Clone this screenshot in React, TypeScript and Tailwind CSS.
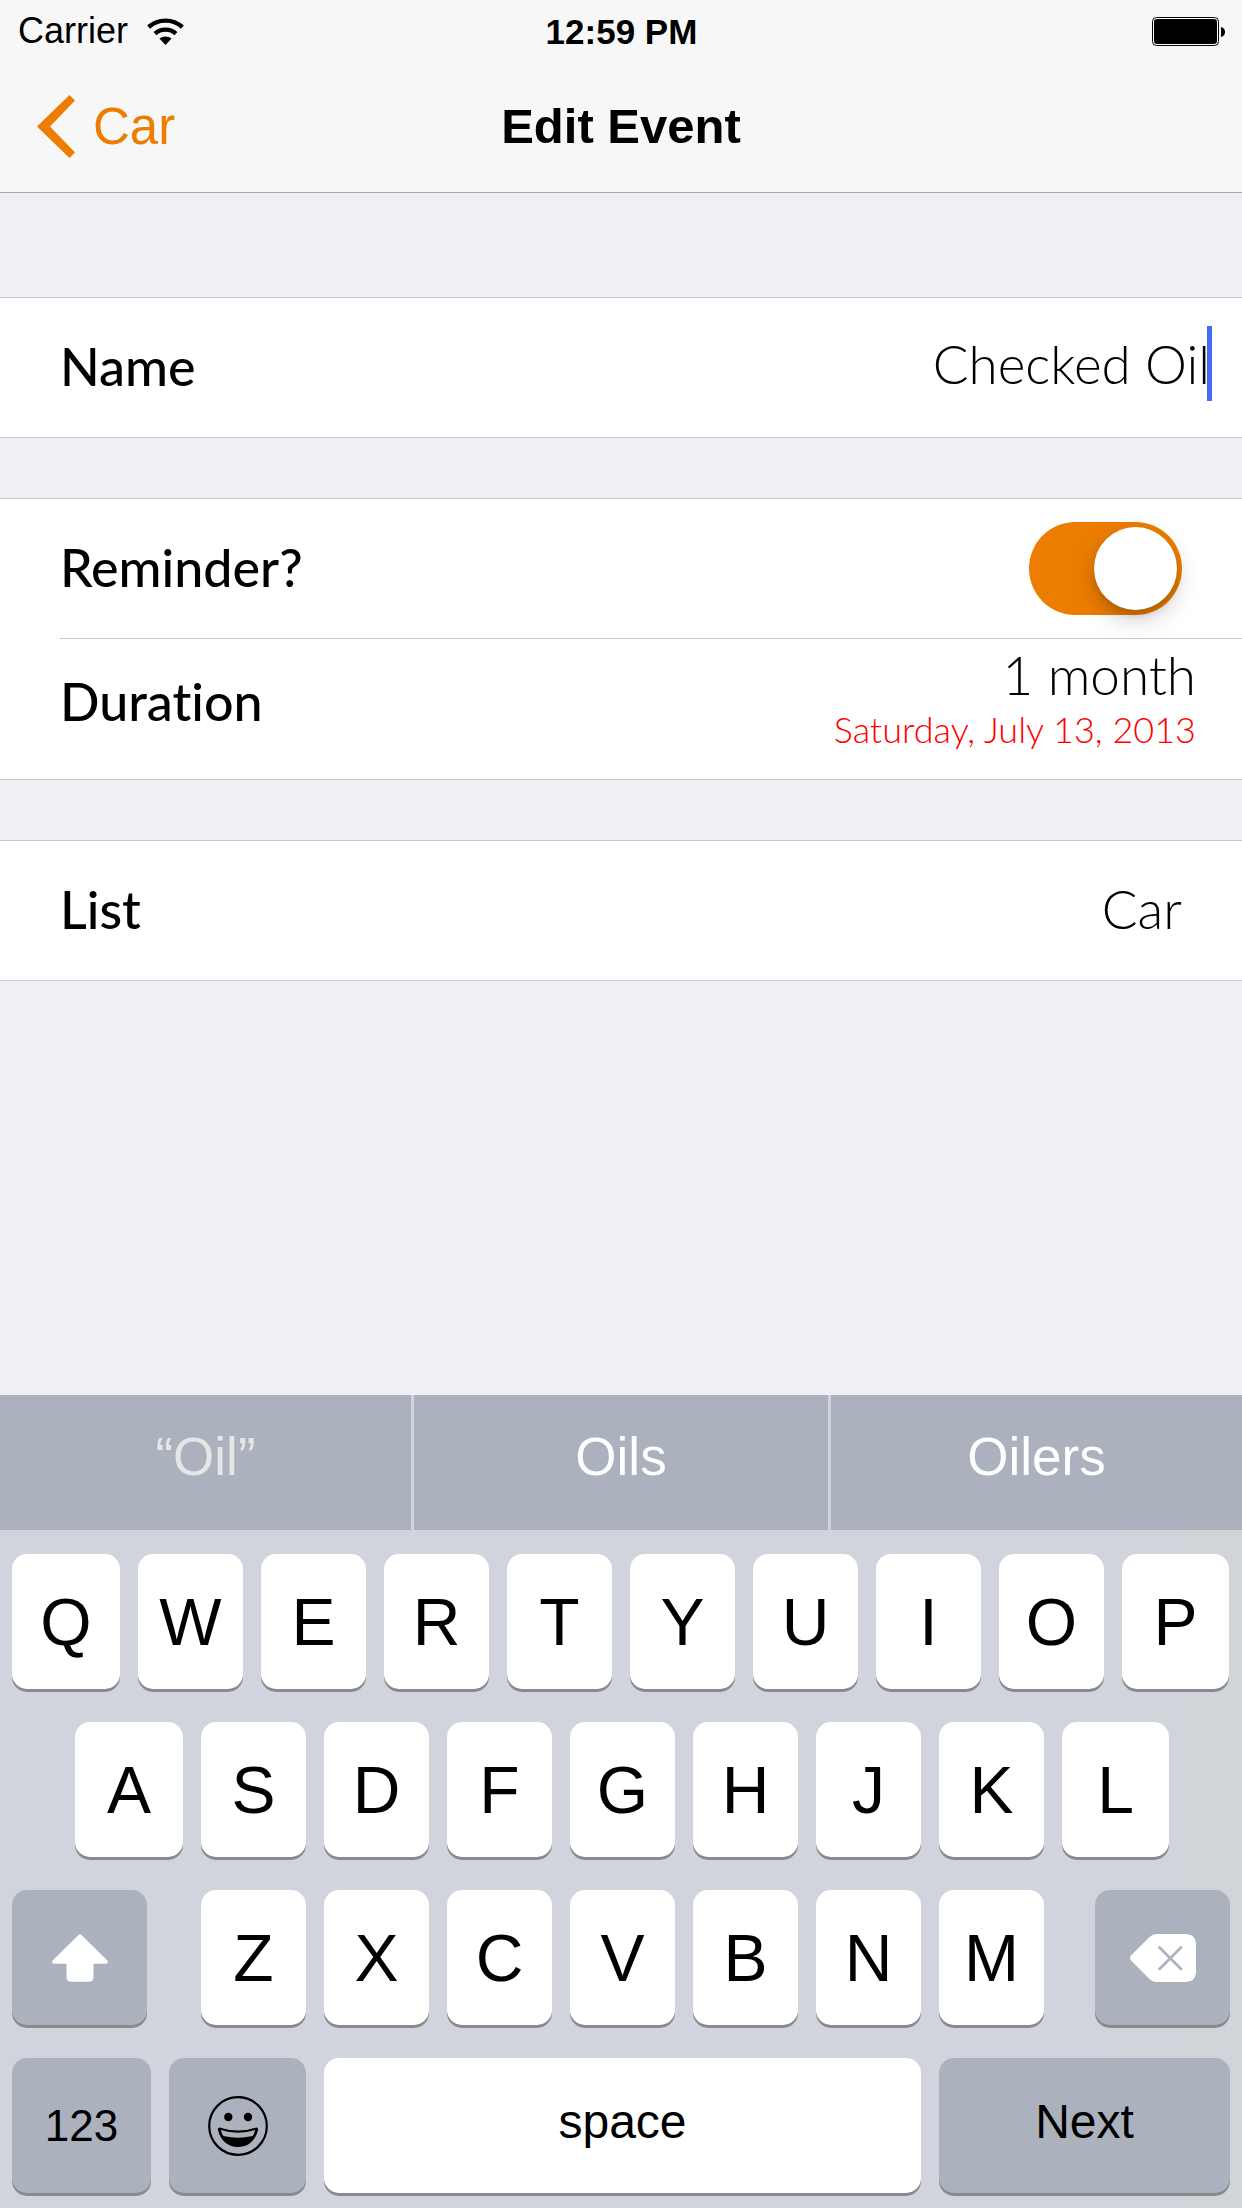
import React, { useState } from "react";

const SANS = "font-['Liberation_Sans',Arial,sans-serif]";

function WifiIcon() {
  return (
    <svg width="37" height="27" viewBox="0 0 37 27" aria-hidden="true">
      <g fill="none" stroke="#000" strokeWidth="4.4">
        <path d="M1.6 9 A25.5 25.5 0 0 1 35.4 9" />
        <path d="M8 15.6 A16 16 0 0 1 29 15.6" />
      </g>
      <path d="M12.4 20.6 A9.5 9.5 0 0 1 24.6 20.6 L18.5 27 Z" />
    </svg>
  );
}

function BatteryIcon() {
  return (
    <svg width="73" height="29" viewBox="0 0 73 29" role="img" aria-label="Battery full">
      <rect x="0.5" y="0.5" width="66" height="28" rx="4" fill="#fff" stroke="#000" />
      <rect x="2" y="2" width="63" height="25" rx="3" />
      <path d="M69 10 Q73 11 73 15 Q73 19 69 20 Z" />
    </svg>
  );
}

function ShiftIcon() {
  return (
    <svg width="56" height="48" viewBox="0 0 56 48" fill="#fff" aria-hidden="true">
      <path d="M26.8 0.8 Q28 -0.4 29.2 0.8 L55.4 26.6 Q56.8 29.5 54 29.8 L41.5 29.8 L41.5 43 Q41.5 47.8 36.8 47.8 L19.2 47.8 Q14.5 47.8 14.5 43 L14.5 29.8 L2 29.8 Q-0.8 29.5 0.6 26.6 Z" />
    </svg>
  );
}

function BackspaceIcon() {
  return (
    <svg width="66" height="48" viewBox="0 0 66 48" aria-hidden="true">
      <path
        fill="#fff"
        d="M1 21.5 L19 3.5 Q22.5 0 27 0 L55 0 Q66 0 66 11 L66 37 Q66 48 55 48 L27 48 Q22.5 48 19 44.5 L1 26.5 Q-1 24 1 21.5 Z"
      />
      <path d="M29.5 13.5 L51 35 M51 13.5 L29.5 35" stroke="#abb1bd" strokeWidth="2.6" strokeLinecap="round" />
    </svg>
  );
}

function SmileIcon() {
  return (
    <svg width="60" height="60" viewBox="0 0 60 60" aria-hidden="true">
      <circle cx="30" cy="30" r="28.8" fill="none" stroke="#000" strokeWidth="2.2" />
      <circle cx="20.3" cy="21" r="4.2" />
      <circle cx="40" cy="21" r="4.2" />
      <path d="M10 34 Q9.400 31 12.500 31.700 Q30 37.500 47.500 31.700 Q50.600 31 50 34 C47.500 45 39.500 51 30 51 C20.500 51 12.500 45 10 34 Z" />
      <path fill="#abb1bd" d="M12.800 34 Q30 39.500 47.200 34 Q46.200 38 44.600 40 Q30 43.500 15.400 40 Q13.800 38 12.800 34 Z" />
    </svg>
  );
}

function Key({
  children,
  dark = false,
  size = "text-[66px]",
  label,
  className = "",
}: {
  children: React.ReactNode;
  dark?: boolean;
  size?: string;
  label?: string;
  className?: string;
}) {
  return (
    <button
      type="button"
      aria-label={label}
      className={`flex h-[135px] min-w-0 items-center justify-center rounded-[15px] leading-none text-black shadow-[0_3px_0_#888a8e] ${
        dark ? "bg-[#abb1bd]" : "bg-white"
      } ${size} ${className}`}
    >
      {children}
    </button>
  );
}

function Letters({ keys }: { keys: string }) {
  return (
    <>
      {keys.split("").map((k) => (
        <Key key={k}>{k}</Key>
      ))}
    </>
  );
}

const LABEL = "text-[52px] leading-none font-medium";
const VALUE = "text-[53px] leading-none font-light";

export default function App() {
  const [name, setName] = useState("Checked Oil");
  const [reminder, setReminder] = useState(true);

  return (
    <div className={`flex min-h-screen w-full flex-col bg-[#efeff4] text-black ${SANS}`}>
      <header className="border-b border-[#a7a7aa] bg-[#f7f7f7]">
        <div className="grid h-15 grid-cols-3 items-center pt-0.5 pr-[17px] pl-[18px] text-4xl leading-none">
          <div className="flex items-center gap-[19px]">
            <span>Carrier</span>
            <WifiIcon />
          </div>
          <time className="text-center text-[35px] font-bold">12:59 PM</time>
          <div className="flex justify-end">
            <BatteryIcon />
          </div>
        </div>
        <nav className="grid h-33 grid-cols-3 items-center px-[37px] leading-none">
          <a href="#car" className="flex items-center gap-[18px] text-[51px] text-[#ed7d00]">
            <svg width="38" height="63" viewBox="0 0 38 63" fill="currentColor" aria-hidden="true">
              <path d="M32.500 0 L38 5.500 L13 31.500 L38 57.500 L32.500 63 L0 31.500 Z" />
            </svg>
            Car
          </a>
          <h1 className="text-center text-[49px] font-bold whitespace-nowrap">Edit Event</h1>
        </nav>
      </header>

      <main className="flex flex-1 flex-col gap-15 pt-26 pb-15 font-['Lato',sans-serif] [font-variant-ligatures:none]">
        <section className="border-y border-[#c8c7cc] bg-white">
          <div className="flex h-[139px] items-center justify-between pr-8 pb-1 pl-15">
            <label htmlFor="name" className={LABEL}>
              Name
            </label>
            <div className="relative mb-1 flex min-w-0 flex-1 items-center">
              <input
                id="name"
                type="text"
                value={name}
                onChange={(e) => setName(e.target.value)}
                className={`w-full min-w-0 bg-transparent text-right caret-transparent outline-none ${VALUE}`}
              />
              <span className="absolute -right-0.5 h-[75px] w-[5px] bg-[#466cf2]" />
            </div>
          </div>
        </section>

        <section className="border-y border-[#c8c7cc] bg-white">
          <div className="flex h-[139px] items-center justify-between pr-15 pl-15">
            <label htmlFor="reminder" className={`mb-1 ${LABEL}`}>
              Reminder?
            </label>
            <input
              id="reminder"
              type="checkbox"
              role="switch"
              checked={reminder}
              onChange={(e) => setReminder(e.target.checked)}
              className="flex h-[93px] w-[153px] appearance-none items-center rounded-full bg-gray-300 p-[5px] before:size-[83px] before:rounded-full before:bg-white before:shadow-[0_9px_24px_rgba(0,0,0,0.2),0_6px_6px_rgba(0,0,0,0.1)] checked:justify-end checked:bg-[#ed7d00]"
            />
          </div>
          <div className="ml-15 flex h-[141px] items-center justify-between border-t border-[#c8c7cc] pr-[46px] pb-4">
            <span className={LABEL}>Duration</span>
            <div className="mb-2 flex flex-col items-end gap-2.5">
              <span className={VALUE}>1 month</span>
              <span className="text-4xl leading-none font-light text-[#ff0000]">Saturday, July 13, 2013</span>
            </div>
          </div>
        </section>

        <section className="border-y border-[#c8c7cc] bg-white">
          <div className="flex h-[139px] items-center justify-between px-15 pb-1">
            <span className={LABEL}>List</span>
            <span className={VALUE}>Car</span>
          </div>
        </section>
      </main>

      <footer className="bg-linear-to-r from-[#d1d4dc] from-88% to-[#d1d4d8]">
        <div className="grid grid-cols-[411fr_414fr_411fr] gap-[3px] text-[53px] leading-none text-white">
          <button type="button" className="h-[135px] bg-[#abb1bd] pb-3 text-[#e6e6e6]">
            “Oil”
          </button>
          <button type="button" className="h-[135px] bg-[#abb1bd] pb-3">
            Oils
          </button>
          <button type="button" className="h-[135px] bg-[#abb1bd] pb-3">
            Oilers
          </button>
        </div>

        <div className="flex flex-col gap-[33px] px-3 pt-6 pb-[15px]">
          <div className="grid grid-cols-[108fr_repeat(8,105fr)_107fr] gap-[18px] pr-px">
            <Letters keys="QWERTYUIOP" />
          </div>
          <div className="grid grid-cols-[108fr_repeat(7,105fr)_107fr] gap-[18px] pr-[61px] pl-[63px]">
            <Letters keys="ASDFGHJKL" />
          </div>
          <div className="grid grid-cols-[135fr_846fr_135fr] gap-x-[51px]">
            <Key dark label="Shift">
              <ShiftIcon />
            </Key>
            <div className="grid grid-cols-7 gap-[18px] pl-[3px]">
              <Letters keys="ZXCVBNM" />
            </div>
            <Key dark label="Delete">
              <BackspaceIcon />
            </Key>
          </div>
          <div className="grid grid-cols-[139fr_137fr_597fr_291fr] gap-[18px]">
            <Key dark size="text-[44px]">
              123
            </Key>
            <Key dark label="Emoji">
              <SmileIcon />
            </Key>
            <Key size="text-5xl" className="pb-2">
              space
            </Key>
            <Key dark size="text-5xl" className="pb-2">
              Next
            </Key>
          </div>
        </div>
      </footer>
    </div>
  );
}
